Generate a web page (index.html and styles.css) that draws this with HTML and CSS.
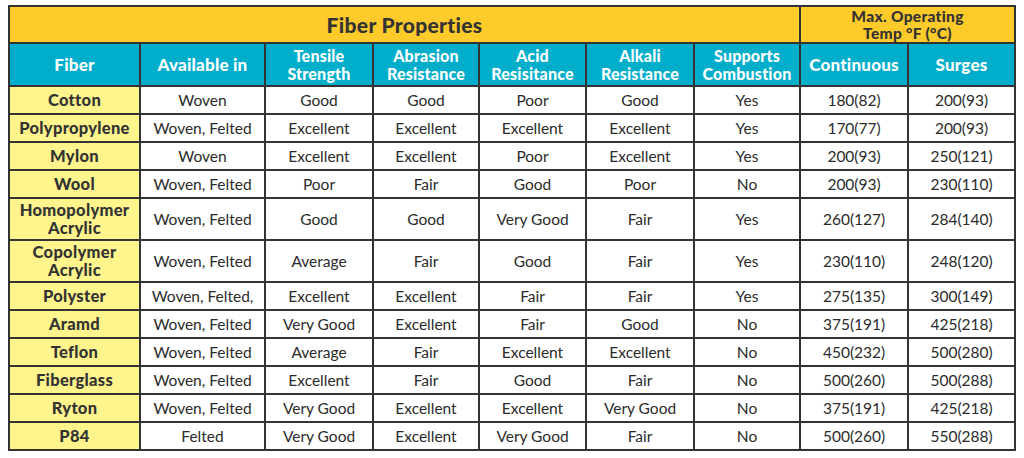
FILE: index.html
```html
<!DOCTYPE html>
<html>
<head>
<meta charset="utf-8">
<link rel="stylesheet" href="styles.css">
</head>
<body>
<table class="props">
  <colgroup>
    <col class="c-fiber"><col class="c-avail"><col class="c-a"><col class="c-b"><col class="c-c"><col class="c-d"><col class="c-e"><col class="c-f"><col class="c-g">
  </colgroup>
  <thead>
    <tr class="h1">
      <th colspan="7" class="title">Fiber Properties</th>
      <th colspan="2" class="temp">Max. Operating<br>Temp °F (°C)</th>
    </tr>
    <tr class="h2">
      <th>Fiber</th>
      <th>Available in</th>
      <th class="two">Tensile<br>Strength</th>
      <th class="two">Abrasion<br>Resistance</th>
      <th class="two">Acid<br>Resisitance</th>
      <th class="two">Alkali<br>Resistance</th>
      <th class="two">Supports<br>Combustion</th>
      <th>Continuous</th>
      <th>Surges</th>
    </tr>
  </thead>
  <tbody>
    <tr><th>Cotton</th><td>Woven</td><td>Good</td><td>Good</td><td>Poor</td><td>Good</td><td>Yes</td><td>180(82)</td><td>200(93)</td></tr>
    <tr><th>Polypropylene</th><td>Woven, Felted</td><td>Excellent</td><td>Excellent</td><td>Excellent</td><td>Excellent</td><td>Yes</td><td>170(77)</td><td>200(93)</td></tr>
    <tr><th>Mylon</th><td>Woven</td><td>Excellent</td><td>Excellent</td><td>Poor</td><td>Excellent</td><td>Yes</td><td>200(93)</td><td>250(121)</td></tr>
    <tr><th>Wool</th><td>Woven, Felted</td><td>Poor</td><td>Fair</td><td>Good</td><td>Poor</td><td>No</td><td>200(93)</td><td>230(110)</td></tr>
    <tr class="tall"><th>Homopolymer<br>Acrylic</th><td>Woven, Felted</td><td>Good</td><td>Good</td><td>Very Good</td><td>Fair</td><td>Yes</td><td>260(127)</td><td>284(140)</td></tr>
    <tr class="tall"><th>Copolymer<br>Acrylic</th><td>Woven, Felted</td><td>Average</td><td>Fair</td><td>Good</td><td>Fair</td><td>Yes</td><td>230(110)</td><td>248(120)</td></tr>
    <tr><th>Polyster</th><td>Woven, Felted,</td><td>Excellent</td><td>Excellent</td><td>Fair</td><td>Fair</td><td>Yes</td><td>275(135)</td><td>300(149)</td></tr>
    <tr><th>Aramd</th><td>Woven, Felted</td><td>Very Good</td><td>Excellent</td><td>Fair</td><td>Good</td><td>No</td><td>375(191)</td><td>425(218)</td></tr>
    <tr><th>Teflon</th><td>Woven, Felted</td><td>Average</td><td>Fair</td><td>Excellent</td><td>Excellent</td><td>No</td><td>450(232)</td><td>500(280)</td></tr>
    <tr><th>Fiberglass</th><td>Woven, Felted</td><td>Excellent</td><td>Fair</td><td>Good</td><td>Fair</td><td>No</td><td>500(260)</td><td>500(288)</td></tr>
    <tr><th>Ryton</th><td>Woven, Felted</td><td>Very Good</td><td>Excellent</td><td>Excellent</td><td>Very Good</td><td>No</td><td>375(191)</td><td>425(218)</td></tr>
    <tr><th>P84</th><td>Felted</td><td>Very Good</td><td>Excellent</td><td>Very Good</td><td>Fair</td><td>No</td><td>500(260)</td><td>550(288)</td></tr>
  </tbody>
</table>
</body>
</html>
```

FILE: styles.css
```css
html, body {
  margin: 0;
  padding: 0;
  background: #ffffff;
}
body {
  padding: 5px 8px;
  font-family: "Lato", "DejaVu Sans", sans-serif;
  color: #333333;
}
.props {
  border-collapse: collapse;
  table-layout: fixed;
  width: 1007px;
}
.c-fiber { width: 131px; }
.c-avail { width: 125px; }
.c-a { width: 108px; }
.c-b { width: 106px; }
.c-c { width: 107px; }
.c-d { width: 108px; }
.c-e { width: 106px; }
.c-f { width: 108px; }
.c-g { width: 107px; }

.props th, .props td {
  border: 2px solid #333333;
  padding: 0 2px;
  text-align: center;
  vertical-align: middle;
  line-height: 18px;
}
.props td {
  font-size: 15.5px;
  font-weight: 400;
  color: #2b2b2b;
}
.h1 th {
  background: #ffcb2b;
  color: #333333;
  height: 35px;
  font-weight: 900;
}
.h1 .title { font-size: 21px; letter-spacing: 0.3px; }
.h1 .temp { font-size: 15.5px; line-height: 17px; letter-spacing: 0.3px; }
.h2 th {
  background: #00aecb;
  color: #ffffff;
  font-size: 17px;
  font-weight: 900;
  height: 41px;
  letter-spacing: 0.2px;
}
.h2 th.two { font-size: 16px; line-height: 18px; letter-spacing: 0.2px; }
tbody th {
  background: #fff58c;
  color: #333333;
  font-size: 16.5px;
  font-weight: 900;
  letter-spacing: 0.3px;
}
tbody th, tbody td { height: 26px; }
.tall th, .tall td { height: 40px; }
```
